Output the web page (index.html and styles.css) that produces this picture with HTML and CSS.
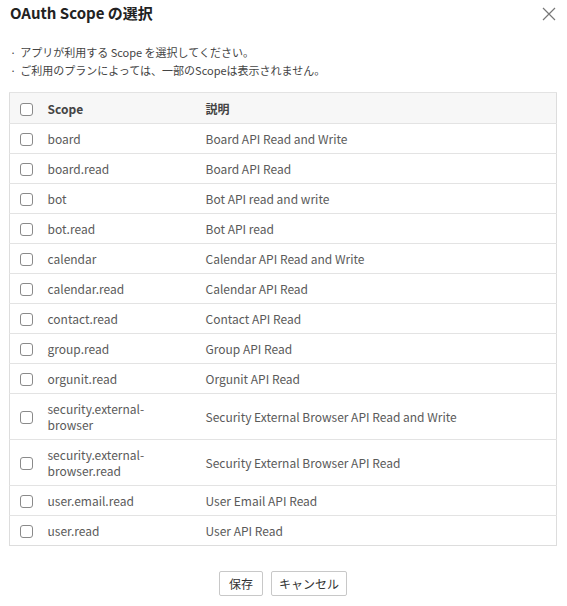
FILE: index.html
```html
<!DOCTYPE html>
<html lang="ja">
<head>
<meta charset="utf-8">
<title>OAuth Scope の選択</title>
<link rel="stylesheet" href="styles.css">
</head>
<body>
<div class="dialog">
  <header class="dialog-header">
    <h1 class="dialog-title">OAuth Scope の選択</h1>
    <button class="close-btn" aria-label="閉じる">
      <svg width="14" height="14" viewBox="0 0 14 14"><path d="M1 1 L13 13 M13 1 L1 13" stroke="#777" stroke-width="1.2" fill="none"/></svg>
    </button>
  </header>
  <ul class="notes">
    <li>アプリが利用する Scope を選択してください。</li>
    <li>ご利用のプランによっては、一部のScopeは表示されません。</li>
  </ul>
  <table class="scope-table">
    <colgroup>
      <col class="col-check">
      <col class="col-scope">
      <col class="col-desc">
    </colgroup>
    <thead>
      <tr><th><input type="checkbox" class="cb"></th><th>Scope</th><th>説明</th></tr>
    </thead>
    <tbody>
      <tr><td><input type="checkbox" class="cb"></td><td>board</td><td>Board API Read and Write</td></tr>
      <tr><td><input type="checkbox" class="cb"></td><td>board.read</td><td>Board API Read</td></tr>
      <tr><td><input type="checkbox" class="cb"></td><td>bot</td><td>Bot API read and write</td></tr>
      <tr><td><input type="checkbox" class="cb"></td><td>bot.read</td><td>Bot API read</td></tr>
      <tr><td><input type="checkbox" class="cb"></td><td>calendar</td><td>Calendar API Read and Write</td></tr>
      <tr><td><input type="checkbox" class="cb"></td><td>calendar.read</td><td>Calendar API Read</td></tr>
      <tr><td><input type="checkbox" class="cb"></td><td>contact.read</td><td>Contact API Read</td></tr>
      <tr><td><input type="checkbox" class="cb"></td><td>group.read</td><td>Group API Read</td></tr>
      <tr><td><input type="checkbox" class="cb"></td><td>orgunit.read</td><td>Orgunit API Read</td></tr>
      <tr><td><input type="checkbox" class="cb"></td><td>security.external-browser</td><td>Security External Browser API Read and Write</td></tr>
      <tr><td><input type="checkbox" class="cb"></td><td>security.external-browser.read</td><td>Security External Browser API Read</td></tr>
      <tr><td><input type="checkbox" class="cb"></td><td>user.email.read</td><td>User Email API Read</td></tr>
      <tr><td><input type="checkbox" class="cb"></td><td>user.read</td><td>User API Read</td></tr>
    </tbody>
  </table>
  <footer class="dialog-footer">
    <button class="btn">保存</button>
    <button class="btn">キャンセル</button>
  </footer>
</div>
</body>
</html>
```
FILE: styles.css
```css
html, body {
  margin: 0;
  padding: 0;
  background: #fff;
}
body {
  font-family: "Noto Sans CJK JP", "Noto Sans", sans-serif;
  color: #555;
}
.dialog {
  padding: 0 10px 0 9px;
}
.dialog-header {
  display: flex;
  justify-content: space-between;
  align-items: center;
  height: 26px;
}
.dialog-title {
  margin: 0 0 0 1px;
  font-size: 15px;
  font-weight: bold;
  color: #222;
  line-height: 26px;
}
.close-btn {
  border: none;
  background: none;
  padding: 0;
  margin-right: 1px;
  margin-top: 2px;
  width: 14px;
  height: 14px;
  display: flex;
}
.notes {
  list-style: none;
  margin: 17px 0 0 1px;
  padding: 0;
  font-size: 11px;
  line-height: 18px;
  color: #444;
}
.notes li::before {
  content: "·";
  margin-right: 4px;
}
.scope-table {
  margin-top: 13px;
  width: 100%;
  border-collapse: collapse;
  table-layout: fixed;
  font-size: 12px;
  border: 1px solid #ddd;
}
.col-check { width: 28px; }
.col-scope { width: 158px; }
.scope-table th,
.scope-table td {
  border-top: 1px solid #e3e3e3;
  padding: 7px 10px 6px 10px;
  line-height: 16px;
  text-align: left;
  vertical-align: middle;
  color: #5a5a5a;
}
.scope-table th:first-child,
.scope-table td:first-child {
  padding-right: 0;
}
.scope-table td:nth-child(2) {
  padding-right: 40px;
}
.scope-table thead th {
  background: #f7f7f7;
  font-weight: bold;
  color: #444;
  padding-top: 8px;
  padding-bottom: 6px;
}
.cb {
  -webkit-appearance: none;
  appearance: none;
  width: 13px;
  height: 13px;
  border: 1px solid #8a8a8a;
  border-radius: 3px;
  margin: 0;
  display: block;
  background: #fff;
}
.dialog-footer {
  display: flex;
  justify-content: center;
  gap: 8px;
  margin-top: 25px;
}
.btn {
  font-family: inherit;
  font-size: 12px;
  color: #333;
  background: #fff;
  border: 1px solid #c8c8c8;
  border-radius: 2px;
  height: 25px;
  padding: 0;
  width: 76px;
}
.btn:first-child {
  width: 44px;
}
```
